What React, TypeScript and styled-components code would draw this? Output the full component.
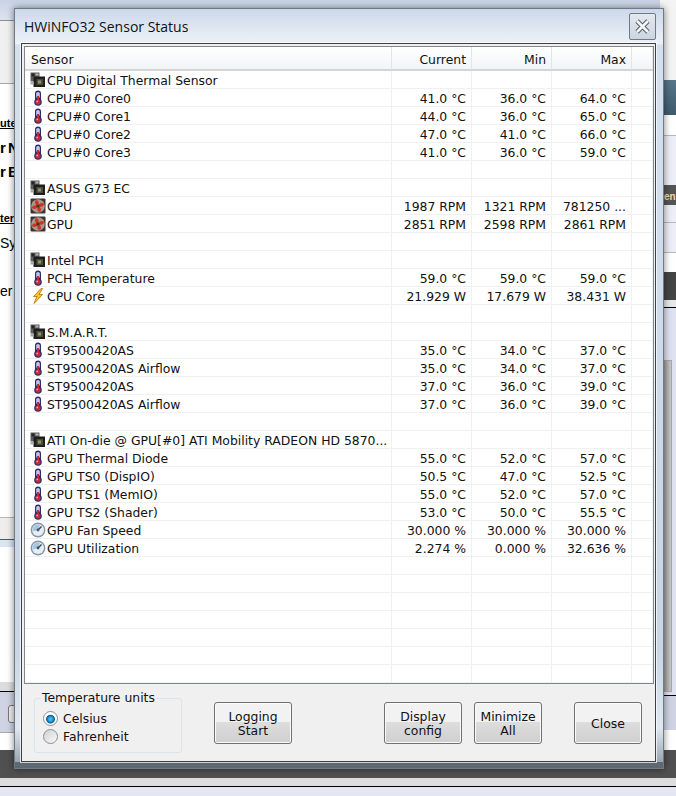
import React from "react";
import styled, { createGlobalStyle } from "styled-components";

const GlobalStyle = createGlobalStyle`
  html, body {
    margin: 0;
    padding: 0;
    background: #ffffff;
  }
`;

const Desktop = styled.div`
  position: relative;
  width: 676px;
  height: 796px;
  overflow: hidden;
  font-family: "DejaVu Sans", Verdana, sans-serif;
  font-size: 12.4px;
  color: #000;
  background: #ffffff;
`;

const BehindTop = styled.div`
  position: absolute;
  left: 0;
  top: 0;
  width: 676px;
  height: 20px;
  background: linear-gradient(#c9d3e6, #dde3f0);
`;

// what shows of the windows behind, left of the dialog
const BehindLeft = styled.div`
  position: absolute;
  left: 0;
  top: 20px;
  width: 20px;
  height: 730px;
  background: linear-gradient(
    #8f8f8f 0 1px,
    #f0f0f0 1px 63px,
    #a8a8a8 63px 64px,
    #ffffff 64px 497px,
    #b5b5b5 497px 498px,
    #efeeec 498px 519px,
    #555555 519px 520px,
    #d8e6f2 520px 527px,
    #ffffff 527px 662px,
    #dddddd 662px 671px,
    #000000 671px 672px,
    #d0d3e4 672px 712px,
    #a8a8a8 712px 713px,
    #ffffff 713px
  );
`;

const BehindRight = styled.div`
  position: absolute;
  left: 660px;
  top: 0;
  width: 16px;
  height: 750px;
  background: linear-gradient(
    #f4f4f4 0 80px,
    #57778b 80px,
    #3f5a6b 115px,
    #ffffff 115px 135px,
    #b8b8b8 135px 136px,
    #eeeef8 136px 185px,
    #555555 185px 205px,
    #eeeef8 205px 222px,
    #b8b8b8 222px 223px,
    #eeeef8 223px 252px,
    #b8b8b8 252px 253px,
    #ffffff 253px 272px,
    #454545 272px 300px,
    #e8e8e8 300px 307px,
    #000000 307px 308px,
    #dfe2f0 308px 695px,
    #000000 695px 696px,
    #d0d3e4 696px 730px,
    #ffffff 730px
  );
`;

const BehindBottom = styled.div`
  position: absolute;
  left: 0;
  top: 750px;
  width: 676px;
  height: 46px;
  background: linear-gradient(
    #505050 0 28px,
    #dddddd 28px 36px,
    #000000 36px 37px,
    #e4e7f3 37px
  );
`;

const BehindScroll = styled.div`
  position: absolute;
  left: 660px;
  top: 360px;
  width: 12px;
  height: 332px;
  box-sizing: border-box;
  border: 1px solid #a8a8a8;
  background: linear-gradient(90deg, #8e8e8e, #c8c8c8);
`;

const BehindButton = styled.div`
  position: absolute;
  left: 8px;
  top: 705px;
  width: 14px;
  height: 18px;
  box-sizing: border-box;
  border: 1px solid #777;
  border-radius: 3px;
  background: #eeeeee;
`;

const BehindText = styled.span<{ $top: number; $size: number; $bold?: boolean; $under?: boolean }>`
  position: absolute;
  left: 0;
  top: ${(p) => p.$top}px;
  font-family: "Liberation Sans", Arial, sans-serif;
  font-size: ${(p) => p.$size}px;
  font-weight: ${(p) => (p.$bold ? 700 : 400)};
  text-decoration: ${(p) => (p.$under ? "underline" : "none")};
  word-spacing: -2px;
  white-space: nowrap;
`;

const BehindTab = styled.span`
  position: absolute;
  left: 664px;
  top: 191px;
  font-family: "Liberation Sans", Arial, sans-serif;
  font-size: 10px;
  font-weight: 700;
  color: #f0d8b0;
  white-space: nowrap;
`;

const Window = styled.div`
  position: absolute;
  left: 14px;
  top: 8px;
  width: 650px;
  height: 761px;
  box-sizing: border-box;
  display: flex;
  flex-direction: column;
  padding: 0 7px 6px 6px;
  border: 1px solid #6f7a84;
  background:
    linear-gradient(to top, #5c6872 0 6px, transparent 6px),
    linear-gradient(to top, #8d99a5, #dfe8f1 40px, transparent 120px),
    linear-gradient(#ccd8ea, #eef2f7 35px, #d3e0ed 36px, #c6d4e3);
  box-shadow: 0 0 7px rgba(0, 0, 0, 0.5);
`;

const TitleBar = styled.div`
  height: 34px;
  flex: none;
  display: flex;
  align-items: center;
  justify-content: space-between;
  padding: 0 0 0 3px;
`;

const Title = styled.div`
  font-family: "Open Sans", sans-serif;
  font-size: 14px;
  color: #111;
`;

const CloseBox = styled.div`
  width: 27px;
  height: 27px;
  box-sizing: border-box;
  margin: 1px 0 0 0;
  border: 1px solid #6f7a84;
  border-radius: 2px;
  display: flex;
  align-items: center;
  justify-content: center;
  background: linear-gradient(#e4e9f0, #ccd5e0);
`;

const Client = styled.div`
  flex: 1;
  min-height: 0;
  display: flex;
  flex-direction: column;
  border: 1px solid #404040;
  box-shadow: 0 0 0 1px rgba(255, 255, 255, 0.7);
  background: #f0f0f0;
  padding: 2px 1px 0 2px;
`;

const Table = styled.div`
  height: 638px;
  flex: none;
  box-sizing: border-box;
  border: 1px solid #828790;
  background: #fff;
  overflow: hidden;
`;

const Row = styled.div`
  display: grid;
  grid-template-columns: 367px 80px 80px 80px 1fr;
  height: 18px;
  box-sizing: border-box;
  border-bottom: 1px solid #f0f0f0;
  line-height: 19px;
`;

const HeaderRow = styled(Row)`
  height: 24px;
  line-height: 26px;
  border-bottom: 2px solid #d5d5d5;
  background: linear-gradient(#ffffff, #f3f4f6);
`;

const Cell = styled.div<{ $right?: boolean }>`
  border-right: 1px solid #f0f0f0;
  padding: ${(p) => (p.$right ? "0 5px 0 0" : "0 0 0 6px")};
  text-align: ${(p) => (p.$right ? "right" : "left")};
  white-space: nowrap;
  overflow: hidden;
  color: #111;
`;

const HeaderCell = styled(Cell)`
  border-right: 1px solid #e3e5e8;
`;

const Name = styled.div`
  display: flex;
  align-items: flex-start;
  gap: 1px;
  height: 17px;
  margin-left: -1px;
`;

const IconSlot = styled.span`
  display: flex;
  height: 17px;
  align-items: center;
`;

const Bottom = styled.div`
  flex: 1;
  display: flex;
  align-items: flex-start;
  padding: 18px 0 0 10px;
`;

const GroupBox = styled.fieldset`
  width: 148px;
  height: 61px;
  box-sizing: border-box;
  margin: -10px 32px 0 0;
  padding: 0 0 0 8px;
  border: 1px solid #dce3ea;
  border-radius: 3px;
  min-inline-size: 0;
`;

const Legend = styled.legend`
  padding: 0 1px;
  margin-left: -2px;
  line-height: 12px;
  color: #111;
`;

const RadioGroup = styled.div`
  padding-top: 5px;
`;

const RadioRow = styled.div`
  display: flex;
  align-items: center;
  gap: 5px;
  height: 18px;
  color: #111;
`;

const Radio = styled.span<{ $on?: boolean }>`
  width: 15px;
  height: 15px;
  flex: none;
  box-sizing: border-box;
  border-radius: 50%;
  border: 1px solid #8a8f95;
  background: ${(p) =>
    p.$on
      ? "radial-gradient(circle at 50% 55%, #35b6ee 0 1.5px, #0a5d9c 4px, #ffffff 4.8px)"
      : "linear-gradient(135deg, #d0d0d0, #fafafa)"};
`;

const Button = styled.div<{ $w: number; $gap: number }>`
  width: ${(p) => p.$w}px;
  height: 42px;
  margin-right: ${(p) => p.$gap}px;
  padding-top: 2px;
  box-sizing: border-box;
  border: 1px solid #707070;
  border-radius: 3px;
  display: flex;
  align-items: center;
  justify-content: center;
  text-align: center;
  line-height: 14px;
  color: #111;
  background: linear-gradient(#f2f2f2 0 47%, #dddddd 48%, #cfcfcf);
  box-shadow: inset 0 0 0 1px #fbfbfb;
`;

const Thermo = () => (
  <svg width="16" height="16" viewBox="0 0 16 16">
    <rect x="5" y="0.5" width="6" height="11" rx="3" fill="#2c2c66" />
    <circle cx="8" cy="12" r="3.8" fill="#2c2c66" />
    <rect x="6.2" y="2" width="3.6" height="6" rx="1.6" fill="#c4c4ee" />
    <rect x="7" y="6" width="2" height="6" fill="#c8283a" />
    <circle cx="8" cy="12" r="2.6" fill="#c8283a" />
    <circle cx="7.2" cy="11.4" r="0.9" fill="#f3a0a0" />
  </svg>
);

const Chip = () => (
  <svg width="16" height="16" viewBox="0 0 16 16">
    <rect x="0.5" y="0.5" width="9" height="9" fill="#5f5f5f" />
    <rect x="1.5" y="1.5" width="3" height="3" fill="#262626" />
    <rect x="5.5" y="1.5" width="3" height="2" fill="#b5b5b5" />
    <rect x="3.5" y="4.5" width="11.5" height="10.5" fill="#1e1e1e" />
    <rect x="6.5" y="7" width="6.5" height="6" fill="#4d4d3a" />
    <rect x="8" y="8.5" width="3" height="3" fill="#8f9468" />
    <rect x="0.5" y="9.5" width="3" height="3" fill="#a8a8a8" />
  </svg>
);

const Fan = () => (
  <svg width="16" height="16" viewBox="0 0 16 16">
    <rect x="0.5" y="0.5" width="15" height="15" rx="1" fill="#3c3434" />
    <circle cx="8" cy="8" r="6.8" fill="#a89890" />
    <path d="M8 8 C5 7 4 4 6 2 C8.5 2 9.5 5 8 8Z" fill="#c8381e" />
    <path d="M8 8 C9 5 12 4 14 6 C14 8.5 11 9.5 8 8Z" fill="#c8381e" />
    <path d="M8 8 C11 9 12 12 10 14 C7.5 14 6.5 11 8 8Z" fill="#c8381e" />
    <path d="M8 8 C7 11 4 12 2 10 C2 7.5 5 6.5 8 8Z" fill="#c8381e" />
    <circle cx="8" cy="8" r="1.6" fill="#3c3434" />
  </svg>
);

const Bolt = () => (
  <svg width="16" height="16" viewBox="0 0 16 16">
    <path d="M11 0.5 L3.5 8.5 L7 8.5 L4 15.5 L12.5 6.5 L9 6.5 L12.5 0.5Z" fill="#f8c820" stroke="#c0760c" strokeWidth="0.9" />
  </svg>
);

const Gauge = () => (
  <svg width="16" height="16" viewBox="0 0 16 16">
    <circle cx="8" cy="8" r="7.4" fill="#8497a8" />
    <circle cx="8" cy="8" r="6" fill="#e6eef5" />
    <path d="M2.8 9.5 A5.4 5.4 0 0 1 10 3 L8 8Z" fill="#a6c6de" />
    <path d="M8 8 L11.5 4.5" stroke="#3c4650" strokeWidth="1.4" />
    <circle cx="8" cy="8" r="1.4" fill="#49535c" />
  </svg>
);

const icons = { chip: Chip, temp: Thermo, fan: Fan, bolt: Bolt, gauge: Gauge };
type IconName = keyof typeof icons;

type Sensor = { icon?: IconName; name?: string; cur?: string; min?: string; max?: string };

const c = (icon: IconName, name: string, cur?: string, min?: string, max?: string): Sensor => ({ icon, name, cur, min, max });

const sensors: Sensor[] = [
  c("chip", "CPU Digital Thermal Sensor"),
  c("temp", "CPU#0 Core0", "41.0 °C", "36.0 °C", "64.0 °C"),
  c("temp", "CPU#0 Core1", "44.0 °C", "36.0 °C", "65.0 °C"),
  c("temp", "CPU#0 Core2", "47.0 °C", "41.0 °C", "66.0 °C"),
  c("temp", "CPU#0 Core3", "41.0 °C", "36.0 °C", "59.0 °C"),
  {},
  c("chip", "ASUS G73 EC"),
  c("fan", "CPU", "1987 RPM", "1321 RPM", "781250 ..."),
  c("fan", "GPU", "2851 RPM", "2598 RPM", "2861 RPM"),
  {},
  c("chip", "Intel PCH"),
  c("temp", "PCH Temperature", "59.0 °C", "59.0 °C", "59.0 °C"),
  c("bolt", "CPU Core", "21.929 W", "17.679 W", "38.431 W"),
  {},
  c("chip", "S.M.A.R.T."),
  c("temp", "ST9500420AS", "35.0 °C", "34.0 °C", "37.0 °C"),
  c("temp", "ST9500420AS Airflow", "35.0 °C", "34.0 °C", "37.0 °C"),
  c("temp", "ST9500420AS", "37.0 °C", "36.0 °C", "39.0 °C"),
  c("temp", "ST9500420AS Airflow", "37.0 °C", "36.0 °C", "39.0 °C"),
  {},
  c("chip", "ATI On-die @ GPU[#0] ATI Mobility RADEON HD 5870..."),
  c("temp", "GPU Thermal Diode", "55.0 °C", "52.0 °C", "57.0 °C"),
  c("temp", "GPU TS0 (DispIO)", "50.5 °C", "47.0 °C", "52.5 °C"),
  c("temp", "GPU TS1 (MemIO)", "55.0 °C", "52.0 °C", "57.0 °C"),
  c("temp", "GPU TS2 (Shader)", "53.0 °C", "50.0 °C", "55.5 °C"),
  c("gauge", "GPU Fan Speed", "30.000 %", "30.000 %", "30.000 %"),
  c("gauge", "GPU Utilization", "2.274 %", "0.000 %", "32.636 %"),
];

const rows: Sensor[] = [...sensors, ...Array.from({ length: 7 }, () => ({}))];

export default function App() {
  return (
    <Desktop>
      <GlobalStyle />
      <BehindTop />
      <BehindLeft />
      <BehindRight />
      <BehindBottom />
      <BehindScroll />
      <BehindButton />
      <BehindTab>en</BehindTab>
      <BehindText $top={117} $size={11} $bold $under>ute</BehindText>
      <BehindText $top={139} $size={15} $bold>r N</BehindText>
      <BehindText $top={163} $size={15} $bold>r B</BehindText>
      <BehindText $top={212} $size={11} $bold $under>ter</BehindText>
      <BehindText $top={235} $size={14}>Sys</BehindText>
      <BehindText $top={283} $size={14}>er</BehindText>
      <Window>
        <TitleBar>
          <Title>HWiNFO32 Sensor Status</Title>
          <CloseBox>
            <svg width="17" height="17" viewBox="0 0 17 17">
              <path d="M3 3 L14 14 M14 3 L3 14" stroke="#56606a" strokeWidth="4.6" />
              <path d="M3 3 L14 14 M14 3 L3 14" stroke="#f4f6f8" strokeWidth="2.6" />
            </svg>
          </CloseBox>
        </TitleBar>
        <Client>
          <Table>
            <HeaderRow>
              <HeaderCell>Sensor</HeaderCell>
              <HeaderCell $right>Current</HeaderCell>
              <HeaderCell $right>Min</HeaderCell>
              <HeaderCell $right>Max</HeaderCell>
              <HeaderCell />
            </HeaderRow>
            {rows.map((r, i) => {
              const Icon = r.icon ? icons[r.icon] : null;
              return (
                <Row key={i}>
                  <Cell>
                    <Name>
                      {Icon && (
                        <IconSlot>
                          <Icon />
                        </IconSlot>
                      )}
                      {r.name}
                    </Name>
                  </Cell>
                  <Cell $right>{r.cur}</Cell>
                  <Cell $right>{r.min}</Cell>
                  <Cell $right>{r.max}</Cell>
                  <Cell />
                </Row>
              );
            })}
          </Table>
          <Bottom>
            <GroupBox>
              <Legend>Temperature units</Legend>
              <RadioGroup>
                <RadioRow><Radio $on />Celsius</RadioRow>
                <RadioRow><Radio />Fahrenheit</RadioRow>
              </RadioGroup>
            </GroupBox>
            <Button $w={78} $gap={92}>Logging<br />Start</Button>
            <Button $w={78} $gap={12}>Display<br />config</Button>
            <Button $w={68} $gap={32}>Minimize<br />All</Button>
            <Button $w={68} $gap={0}>Close</Button>
          </Bottom>
        </Client>
      </Window>
    </Desktop>
  );
}
